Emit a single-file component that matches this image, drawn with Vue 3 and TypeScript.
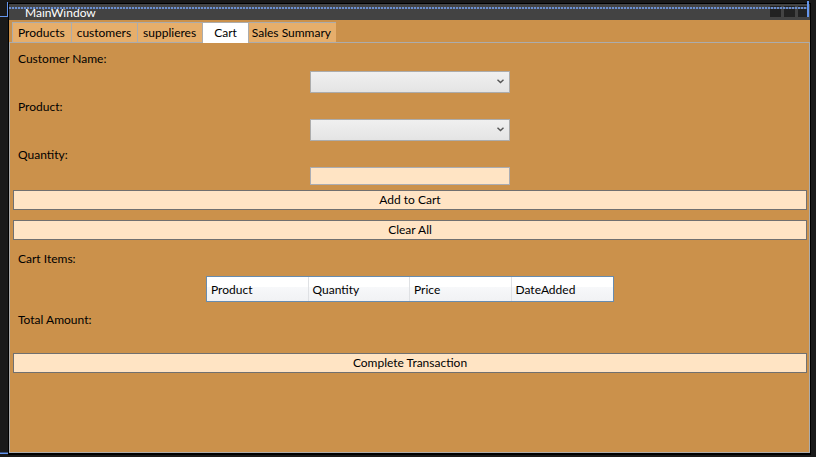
<script setup lang="ts">
import { ref } from 'vue'

const tabs: string[] = ['Products', 'customers', 'supplieres', 'Cart', 'Sales Summary']
const columns: string[] = ['Product', 'Quantity', 'Price', 'DateAdded']
const active = ref('Cart')
const customer = ref('')
const product = ref('')
const quantity = ref('')

function clearAll(): void {
  customer.value = ''
  product.value = ''
  quantity.value = ''
}
</script>

<template>
  <div class="surface">
    <span class="guide guide-top"></span>
    <span class="guide guide-bottom"></span>
    <div class="window">
      <header class="title-bar">
        <h1>MainWindow</h1>
        <div class="caption-boxes"><i></i><i></i><i></i></div>
        <span class="selection-line"></span>
        <span class="selection-edge"></span>
      </header>
      <nav class="tabs" role="tablist">
        <button
          v-for="tab in tabs"
          :key="tab"
          type="button"
          role="tab"
          class="tab"
          :class="{ active: tab === active }"
          :aria-selected="tab === active"
          @click="active = tab"
        >{{ tab }}</button>
      </nav>
      <main class="panel">
        <div class="field">
          <label for="customer">Customer Name:</label>
          <div class="combo">
            <select id="customer" v-model="customer"></select>
            <svg viewBox="0 0 7 5" aria-hidden="true"><path d="M0.5 0.7 L3.5 3.5 L6.5 0.7" /></svg>
          </div>
        </div>
        <div class="field">
          <label for="product">Product:</label>
          <div class="combo">
            <select id="product" v-model="product"></select>
            <svg viewBox="0 0 7 5" aria-hidden="true"><path d="M0.5 0.7 L3.5 3.5 L6.5 0.7" /></svg>
          </div>
        </div>
        <div class="field">
          <label for="quantity">Quantity:</label>
          <input id="quantity" v-model="quantity" type="text" />
        </div>
        <div class="actions">
          <button type="button" class="action">Add to Cart</button>
          <button type="button" class="action" @click="clearAll">Clear All</button>
        </div>
        <h2 id="cart-items">Cart Items:</h2>
        <table aria-labelledby="cart-items">
          <thead>
            <tr><th v-for="column in columns" :key="column" scope="col">{{ column }}</th></tr>
          </thead>
        </table>
        <p class="total">Total Amount:</p>
        <button type="button" class="action">Complete Transaction</button>
      </main>
    </div>
  </div>
</template>

<style>
body {
  background: #1a1a1a;
}
</style>

<style scoped>
* {
  box-sizing: border-box;
}

.surface {
  position: relative;
  display: flex;
  min-height: 100vh;
  padding: 3px 5px 2px 8px;
  background: #1a1a1a;
  color: #000;
  font: 12px/16px Lato, 'Open Sans', sans-serif;
}

.guide {
  position: absolute;
  left: 0;
  width: 8px;
}

.guide-top {
  top: 2px;
  height: 15px;
  border-right: 1px solid #6495ed;
  border-bottom: 1px solid #6495ed;
}

.guide-bottom {
  bottom: 3px;
  height: 2px;
  border-top: 1px solid #36507f;
  background: #6495ed;
}

.window {
  display: flex;
  flex: 1;
  flex-direction: column;
  border: 1px solid #000;
  border-width: 1px 1px 2px 1px;
  background: #cb914b;
}

.title-bar {
  position: relative;
  display: flex;
  justify-content: space-between;
  height: 16px;
  padding-left: 16px;
  background: #434343;
}

h1 {
  margin: 0;
  color: #fff;
  font-size: 12px;
  font-weight: 400;
  line-height: 18px;
}

.caption-boxes {
  display: flex;
  gap: 3px;
  padding: 2px 1px 3px 0;
}

.caption-boxes i {
  width: 11px;
  background: #222;
}

.selection-line {
  position: absolute;
  top: 3px;
  right: 1px;
  left: 0;
  height: 2px;
  background: repeating-linear-gradient(90deg, #6b8fd0 0 2px, #434b5c 2px 3px);
}

.selection-edge {
  position: absolute;
  top: -3px;
  right: 1px;
  width: 2px;
  height: 16px;
  background: #6495ed;
}

.tabs {
  display: flex;
  height: 22px;
  padding: 2px 3px 0;
}

.tab {
  height: 20px;
  margin: 0;
  padding: 0 6px 0 5px;
  border: 1px solid #acacac;
  border-width: 1px 0 0 1px;
  background: #e6ae6b;
  color: #000;
  font: inherit;
  line-height: 19px;
}

.tab.active {
  position: relative;
  height: 21px;
  padding: 0 11px 2px;
  border-right-width: 1px;
  background: #fff;
}

.tab:last-child {
  padding: 0 5px 0 3px;
  border-left: 0;
}

.panel {
  flex: 1;
  padding: 3px 2px 20px 3px;
  border: 1px solid #acacac;
}

.field {
  display: flex;
  flex-direction: column;
  align-items: center;
  margin-bottom: 1px;
}

label,
h2,
.total {
  align-self: stretch;
  margin: 0;
  padding: 0 5px;
  font-size: 12px;
  font-weight: 400;
  line-height: 25px;
}

.combo {
  position: relative;
  width: 200px;
  height: 22px;
}

select {
  display: block;
  width: 100%;
  height: 100%;
  margin: 0;
  border: 1px solid #acacac;
  border-radius: 0;
  background: linear-gradient(#f0f0f0, #e4e4e4);
  appearance: none;
  font: inherit;
}

.combo svg {
  position: absolute;
  top: 8px;
  right: 6px;
  width: 7px;
  height: 5px;
  pointer-events: none;
}

.combo path {
  fill: none;
  stroke: #555;
  stroke-width: 1.4;
}

input {
  width: 200px;
  height: 18px;
  margin: 0;
  padding: 0 3px;
  border: 1px solid #abadb3;
  border-radius: 0;
  background: #ffe4c4;
  font: inherit;
}

.actions {
  display: grid;
  gap: 10px;
  margin: 5px 0 6px;
}

.action {
  display: block;
  width: 100%;
  height: 20px;
  margin: 0;
  padding: 0;
  border: 1px solid #707070;
  background: #ffe4c4;
  color: #000;
  font: inherit;
  line-height: 18px;
}

table {
  width: 408px;
  height: 26px;
  margin: 5px auto;
  border: 1px solid #688caf;
  border-spacing: 0;
  table-layout: fixed;
  background: linear-gradient(#fff 40%, #f7f8fa 41%, #f1f2f4);
}

th {
  padding: 2px 4px 0;
  border-right: 1px solid #dfe1e4;
  font-weight: 400;
  text-align: left;
}

th:last-child {
  border-right: 0;
}

.total {
  margin-bottom: 21px;
}
</style>
